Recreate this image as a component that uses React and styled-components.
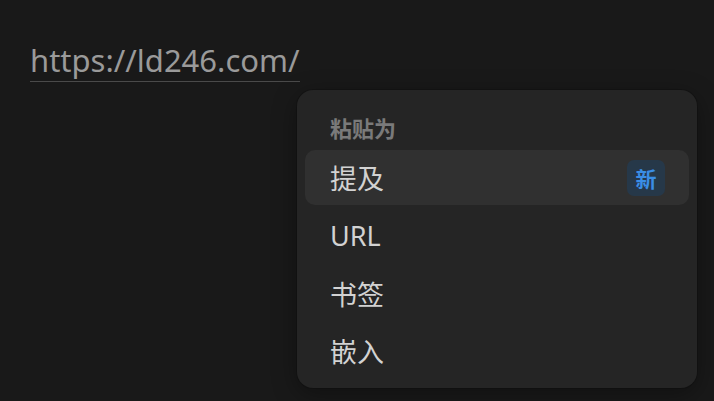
import React from 'react';
import styled, { createGlobalStyle } from 'styled-components';

const Global = createGlobalStyle`
  html, body {
    margin: 0;
    background: #191919;
  }
  body {
    font-family: "Noto Sans", "Noto Sans CJK SC", sans-serif;
  }
`;

const Page = styled.div`
  position: relative;
  width: 714px;
  height: 401px;
  overflow: hidden;
  padding: 39px 30px 0;
  box-sizing: border-box;
`;

const Link = styled.a`
  display: inline-block;
  font-size: 31px;
  line-height: 42px;
  color: #9a9a9a;
  text-decoration: none;
  border-bottom: 1px solid #4a4a4a;
  padding-bottom: 0;
`;

const Menu = styled.div`
  position: absolute;
  left: 297px;
  top: 90px;
  width: 400px;
  height: 298px;
  box-sizing: border-box;
  padding: 8px;
  background: #252525;
  border-radius: 16px;
  box-shadow: 0 0 0 1px rgba(0, 0, 0, 0.15), 0 6px 24px rgba(0, 0, 0, 0.35);
  display: flex;
  flex-direction: column;
`;

const Heading = styled.div`
  height: 52px;
  padding: 6px 25px 0;
  box-sizing: border-box;
  display: flex;
  align-items: center;
  font-size: 22px;
  font-weight: 700;
  color: #7a7a7a;
`;

const Item = styled.div`
  height: 56px;
  margin-bottom: 2px;
  padding: 1px 24px 0 25px;
  box-sizing: border-box;
  display: flex;
  align-items: center;
  justify-content: space-between;
  border-radius: 10px;
  font-size: 27px;
  color: #d2d2d2;
  background: ${({ $active }) => ($active ? '#303030' : 'transparent')};
`;

const Badge = styled.span`
  width: 38px;
  height: 36px;
  display: flex;
  align-items: center;
  justify-content: center;
  border-radius: 7px;
  background: #263849;
  color: #3a8ee6;
  font-size: 21px;
  font-weight: 700;
`;

const items = ['提及', 'URL', '书签', '嵌入'];

export default function App() {
  return (
    <Page>
      <Global />
      <Link>https://ld246.com/</Link>
      <Menu>
        <Heading>粘贴为</Heading>
        {items.map((label, i) => (
          <Item key={label} $active={i === 0}>
            <span>{label}</span>
            {i === 0 && <Badge>新</Badge>}
          </Item>
        ))}
      </Menu>
    </Page>
  );
}
